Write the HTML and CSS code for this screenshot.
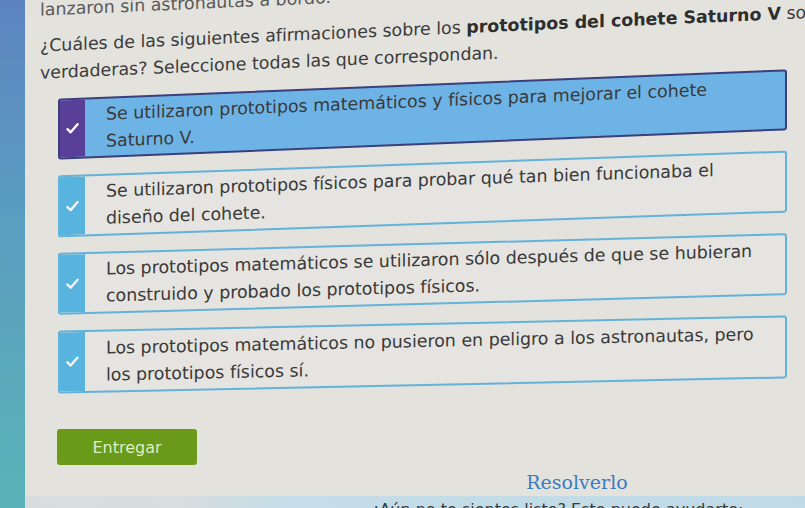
FILE: index.html
```html
<!DOCTYPE html>
<html lang="es">
<head>
<meta charset="utf-8">
<title>Prototipos del cohete Saturno V</title>
<link rel="stylesheet" href="styles.css">
</head>
<body>
<div class="page">
  <aside class="strip"></aside>
  <main class="main">
    <div class="head">
      <p class="top-line">lanzaron sin astronautas a bordo.</p>
      <p class="question">¿Cuáles de las siguientes afirmaciones sobre los <b>prototipos del cohete Saturno V</b> son<br>verdaderas? Seleccione todas las que correspondan.</p>
    </div>
    <ul class="options">
      <li class="option selected opt-1">
        <span class="check"><svg viewBox="0 0 14 12" width="13" height="11"><polyline points="1.5,6.5 5,10 12.5,1.5" fill="none" stroke="#fff" stroke-width="2.6" stroke-linecap="round" stroke-linejoin="round"/></svg></span>
        <span class="label">Se utilizaron prototipos matemáticos y físicos para mejorar el cohete<br>Saturno V.</span>
      </li>
      <li class="option opt-2">
        <span class="check"><svg viewBox="0 0 14 12" width="13" height="11"><polyline points="1.5,6.5 5,10 12.5,1.5" fill="none" stroke="#eef6f9" stroke-width="2.6" stroke-linecap="round" stroke-linejoin="round"/></svg></span>
        <span class="label">Se utilizaron prototipos físicos para probar qué tan bien funcionaba el<br>diseño del cohete.</span>
      </li>
      <li class="option opt-3">
        <span class="check"><svg viewBox="0 0 14 12" width="13" height="11"><polyline points="1.5,6.5 5,10 12.5,1.5" fill="none" stroke="#eef6f9" stroke-width="2.6" stroke-linecap="round" stroke-linejoin="round"/></svg></span>
        <span class="label">Los prototipos matemáticos se utilizaron sólo después de que se hubieran<br>construido y probado los prototipos físicos.</span>
      </li>
      <li class="option opt-4">
        <span class="check"><svg viewBox="0 0 14 12" width="13" height="11"><polyline points="1.5,6.5 5,10 12.5,1.5" fill="none" stroke="#eef6f9" stroke-width="2.6" stroke-linecap="round" stroke-linejoin="round"/></svg></span>
        <span class="label">Los prototipos matemáticos no pusieron en peligro a los astronautas, pero<br>los prototipos físicos sí.</span>
      </li>
    </ul>
    <button class="submit">Entregar</button>
    <h2 class="solve">Resolverlo</h2>
    <div class="help"><span class="help-text">¡Aún no te sientes listo? Esto puede ayudarte:</span></div>
  </main>
</div>
</body>
</html>
```
FILE: styles.css
```css
html, body {
  margin: 0;
  padding: 0;
}
body {
  width: 805px;
  height: 508px;
  overflow: hidden;
  background: #e3e2dd;
  font-family: "DejaVu Sans", Verdana, sans-serif;
  color: #3a3a3a;
}
.page {
  display: flex;
  height: 508px;
}
.strip {
  flex: 0 0 25px;
  background: linear-gradient(to bottom, #5d84c0 0%, #5a9cc0 40%, #5ab3b8 100%);
}
.main {
  flex: 0 0 1106px;
  padding-left: 15px;
  box-sizing: border-box;
}
.head {
  transform: skewY(-2.5deg);
  transform-origin: 382px 0;
}
.top-line {
  margin: -17px 0 0;
  height: 20px;
  line-height: 20px;
  font-size: 17.4px;
  color: #5a5a5a;
  white-space: nowrap;
}
.question {
  margin: 13px 0 0;
  font-size: 17.4px;
  line-height: 27px;
  white-space: nowrap;
  color: #3c3c3c;
}
.question b {
  font-weight: bold;
  color: #2e2e2e;
}
.options {
  list-style: none;
  margin: 14px 0 0 18px;
  padding: 0;
  width: 729px;
  display: flex;
  flex-direction: column;
  gap: 18px;
}
.option {
  display: flex;
  height: 61px;
  box-sizing: border-box;
  border: 2px solid #62b2da;
  border-radius: 3px;
  background: #e5e4e0;
  overflow: hidden;
  transform-origin: 364px 50%;
}
.opt-1 { transform: skewY(-2.3deg); }
.opt-2 { height: 62px; transform: skewY(-1.95deg); }
.opt-3 { height: 62px; transform: skewY(-1.55deg); }
.opt-4 { height: 63px; transform: skewY(-1.2deg); }
.check {
  flex: 0 0 25px;
  background: #58b3de;
  display: flex;
  align-items: center;
  justify-content: center;
}
.label {
  padding-left: 21px;
  display: flex;
  align-items: center;
  font-size: 17.4px;
  line-height: 27px;
  white-space: nowrap;
}
.option.selected {
  border-color: #3b3f7c;
  background: #6db3e6;
}
.option.selected .check {
  background: #5a3f98;
}
.submit {
  display: block;
  margin: 43px 0 0 17px;
  width: 140px;
  height: 36px;
  border: none;
  border-radius: 3px;
  background: #6a9a1a;
  color: #dcefc2;
  font-family: "DejaVu Sans", Verdana, sans-serif;
  font-size: 16px;
  padding: 0;
}
.solve {
  margin: 5px 0 0;
  width: 1074px;
  text-align: center;
  font-family: "DejaVu Serif", "Liberation Serif", serif;
  font-weight: normal;
  font-size: 19px;
  line-height: 24px;
  color: #3b7cc2;
}
.help {
  margin: 2px 0 0 -15px;
  height: 20px;
  padding-left: 348px;
  padding-top: 4px;
  background: linear-gradient(to right, #d8dcdc 0px, #d6dde0 170px, #c4dde8 260px, #bcd9e6 100%);
  font-size: 16px;
  line-height: 20px;
  color: #3a3a3a;
}
```
